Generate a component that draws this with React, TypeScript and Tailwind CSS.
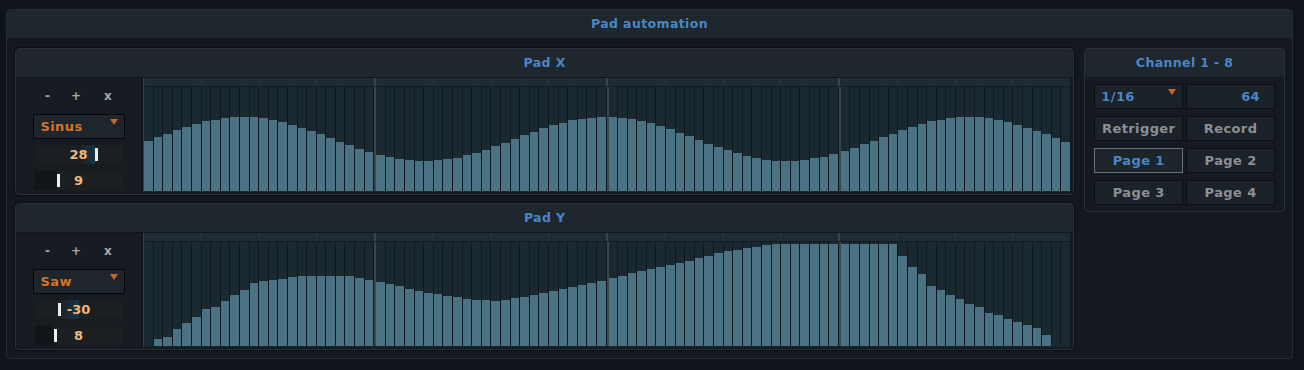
const BARS = 96;

// Pad X: sine wave, heights in px inside a 104px lane
const padX = Array.from({ length: BARS }, (_, i) =>
  Math.round(52 + 22 * Math.sin((2 * Math.PI * (i - 0.5)) / 37.5))
);

// Pad Y: smoothed saw, read off the curve as keypoints
const padYKeys: [number, number][] = [
  [0, 0], [1, 7], [2, 9], [3, 17], [4, 23], [5, 29], [6, 37], [7, 39], [8, 45], [9, 51],
  [10, 56], [11, 63], [12, 65], [13, 66], [14, 67], [15, 69], [16, 70], [21, 70], [24, 64],
  [28, 55], [33, 47], [36, 45], [39, 49], [43, 57], [47, 65], [51, 75], [56, 85], [60, 95],
  [65, 102], [77, 102], [78, 90], [79, 79], [80, 72], [81, 60], [82, 56], [83, 51], [84, 47],
  [85, 42], [86, 39], [87, 33], [88, 31], [89, 27], [90, 24], [91, 21], [92, 18], [93, 11],
  [94, 0], [95, 0],
];

function interp(keys: [number, number][], i: number) {
  for (let k = 0; k < keys.length - 1; k++) {
    const [x0, y0] = keys[k];
    const [x1, y1] = keys[k + 1];
    if (i >= x0 && i <= x1) return Math.round(y0 + ((y1 - y0) * (i - x0)) / (x1 - x0 || 1));
  }
  return 0;
}

const padY = Array.from({ length: BARS }, (_, i) => interp(padYKeys, i));

const font = "font-['DejaVu_Sans',sans-serif] font-bold";

function Header({ title }: { title: string }) {
  return (
    <div className={`flex h-[29px] items-center justify-center border-b border-[#11171c] bg-[#1f272e] text-[12.5px] tracking-[0.03em] text-[#4a86c6] ${font}`}>
      {title}
    </div>
  );
}

function Caret() {
  return (
    <svg width="8" height="6" viewBox="0 0 8 6" className="shrink-0">
      <path d="M0 0 H8 L4 6 Z" fill="#c4652c" />
    </svg>
  );
}

function Slider({ value, pos, bipolar }: { value: string; pos: number; bipolar?: boolean }) {
  // pos = thumb offset in px from the left edge of the box
  const center = 44;
  return (
    <div className="relative h-[21px] w-[90px] border border-[#161a1d] bg-[#1c1f22]">
      {bipolar ? (
        <div
          className="absolute inset-y-0 bg-gradient-to-r from-[#1c1f22] to-[#173545]"
          style={
            pos > center
              ? { left: center, width: pos - center }
              : { left: pos, width: center - pos }
          }
        />
      ) : (
        <div className="absolute inset-y-0 left-0 bg-[#121518]" style={{ width: pos }} />
      )}
      <div className="absolute top-[3px] h-[13px] w-[3px] bg-[#e8eef2]" style={{ left: pos }} />
      <div className={`relative flex h-full items-center justify-center text-[13px] text-[#f0b878] ${font}`}>
        {value}
      </div>
    </div>
  );
}

function Controls({ wave, a, b }: { wave: string; a: { v: string; pos: number }; b: { v: string; pos: number } }) {
  return (
    <div className="flex w-[127px] shrink-0 flex-col items-center border-r-2 border-[#0f1418] bg-[#161c21] pt-[9px]">
      <div className={`ml-[29px] flex gap-[21px] self-start text-[12px] text-[#a3a8ac] ${font}`}>
        <span>-</span>
        <span>+</span>
        <span className="ml-[2px]">x</span>
      </div>
      <div className="mt-[9px] flex h-[25px] w-[92px] items-center justify-between border border-[#05080a] bg-[#1e252b] pl-[7px] pr-[6px]">
        <span className={`text-[13px] tracking-[0.03em] text-[#d4742a] ${font}`}>{wave}</span>
        <div className="-mt-[9px]">
          <Caret />
        </div>
      </div>
      <div className="mt-[5px] flex flex-col gap-[5px]">
        <Slider value={a.v} pos={a.pos} bipolar />
        <Slider value={b.v} pos={b.pos} />
      </div>
    </div>
  );
}

function Grid({ data }: { data: number[] }) {
  return (
    <div className="flex flex-1 flex-col border-l border-[#3a4248] bg-[#1a2830]">
      {/* top ruler */}
      <div className="flex h-[9px] border-b border-[#121c23] bg-[#1c2b34]">
        {Array.from({ length: 16 }, (_, s) => (
          <div
            key={s}
            className={`flex-1 ${s > 0 && s % 4 === 0 ? 'border-l-2 border-[#3a454c]' : s > 0 ? 'border-l border-[#2a3a44]' : ''}`}
          />
        ))}
      </div>
      <div className="flex h-[104px]">
        {data.map((h, i) => (
          <div
            key={i}
            className={`relative flex flex-1 flex-col justify-end border-r border-[#0d1921] ${i > 0 && i % 24 === 0 ? 'border-l-2 border-l-[#3a454c]' : ''}`}
          >
            <div className="bg-[#4a7283]" style={{ height: h }} />
          </div>
        ))}
      </div>
    </div>
  );
}

function PadPanel({
  title,
  wave,
  a,
  b,
  data,
}: {
  title: string;
  wave: string;
  a: { v: string; pos: number };
  b: { v: string; pos: number };
  data: number[];
}) {
  return (
    <div className="flex h-[147px] flex-col overflow-hidden rounded-[4px] border border-[#2a3239] bg-[#141a1f] shadow-[0_0_0_1px_#0b0f12]">
      <Header title={title} />
      <div className="flex flex-1 pb-[2px] pr-[3px]">
        <Controls wave={wave} a={a} b={b} />
        <Grid data={data} />
      </div>
    </div>
  );
}

function Btn({ label, active, align = 'center', color }: { label: string; active?: boolean; align?: 'center' | 'left' | 'right'; color?: string }) {
  return (
    <div
      className={`flex h-[25px] items-center border px-[6px] text-[13px] tracking-[0.03em] ${font} ${
        active ? 'border-[#6a7176] bg-[#1c252c] text-[#4a86c6]' : 'border-[#0b0f12] bg-[#1b2228]'
      } ${align === 'left' ? 'justify-between' : align === 'right' ? 'justify-end pr-[14px]' : 'justify-center'} ${
        !active ? color ?? 'text-[#8b9095]' : ''
      }`}
    >
      {label}
      {align === 'left' && (
        <div className="-mt-[9px]">
          <Caret />
        </div>
      )}
    </div>
  );
}

export default function App() {
  return (
    <div className="h-[370px] w-[1304px] bg-[#0e1419] pl-[6px] pt-[9px]">
      <div className="flex h-[350px] w-[1287px] flex-col overflow-hidden rounded-[4px] border border-[#262e35] bg-[#12181d]">
        <Header title="Pad automation" />
        <div className="flex gap-[10px] pl-[8px] pr-[7px] pt-[9px]">
          <div className="flex w-[1061px] flex-col gap-[8px]">
            <PadPanel
              title="Pad X"
              wave="Sinus"
              a={{ v: '28', pos: 60 }}
              b={{ v: '9', pos: 22 }}
              data={padX}
            />
            <PadPanel
              title="Pad Y"
              wave="Saw"
              a={{ v: '-30', pos: 23 }}
              b={{ v: '8', pos: 19 }}
              data={padY}
            />
          </div>
          <div className="flex h-[164px] w-[201px] flex-col overflow-hidden rounded-[4px] border border-[#2a3239] bg-[#141a1f]">
            <Header title="Channel 1 - 8" />
            <div className="grid grid-cols-2 gap-x-[3px] gap-y-[7px] px-[9px] pt-[6px]">
              <Btn label="1/16" align="left" color="text-[#4a86c6]" />
              <Btn label="64" align="right" color="text-[#4a86c6]" />
              <Btn label="Retrigger" />
              <Btn label="Record" />
              <Btn label="Page 1" active />
              <Btn label="Page 2" />
              <Btn label="Page 3" />
              <Btn label="Page 4" />
            </div>
          </div>
        </div>
      </div>
    </div>
  );
}
